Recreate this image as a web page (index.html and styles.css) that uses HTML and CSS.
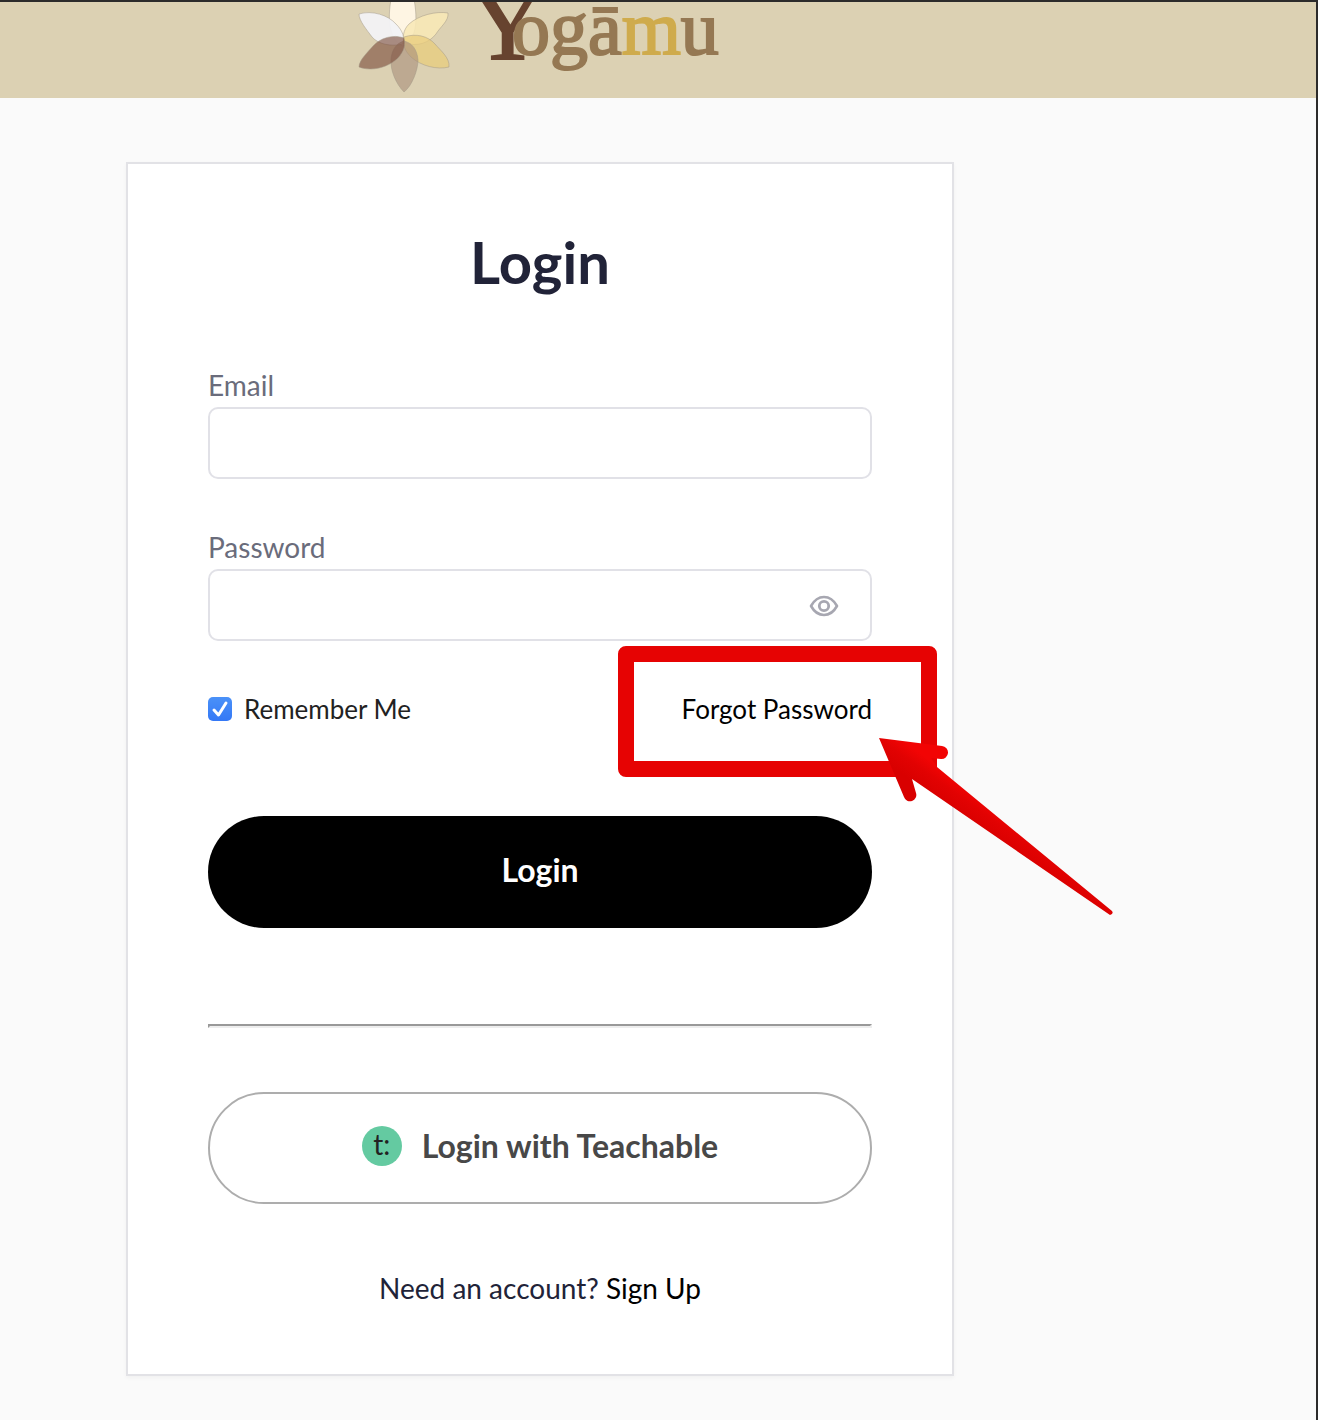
FILE: index.html
```html
<!DOCTYPE html>
<html lang="en">
<head>
<meta charset="utf-8">
<meta name="viewport" content="width=device-width, initial-scale=1">
<title>Yogāmu – Login</title>
<link rel="stylesheet" href="styles.css">
</head>
<body>
<header class="site-header">
  <a class="logo" href="#" aria-label="Yogāmu">
    <svg width="380" height="96" viewBox="350 2 380 96">
      <g stroke="#a39a88" stroke-opacity=".5" stroke-width="1">
        <path d="M403 46C389 40 386 18 393 -10H412C419 18 417 40 403 46Z" fill="#fff7e6" fill-opacity=".95"/>
        <path d="M359 14C372 10 388 15 396 24C403 31 405 38 403 44C391 47 378 44 372 37C367 30 359 21 359 14Z" fill="#f2f2f6" fill-opacity=".95"/>
        <path d="M448 13C436 11 419 15 409 24C403 30 402 38 405 43C417 47 429 43 436 34C440 27 449 21 448 13Z" fill="#f8e8b6" fill-opacity=".88"/>
        <path d="M449 67C437 70 421 66 411 57C404 50 402 43 404 37C416 33 428 36 435 44C441 51 450 58 449 67Z" fill="#e8cc7c" fill-opacity=".75"/>
        <path d="M404 92C396 84 390 70 391 59C392 49 397 43 404 41C412 43 417 49 418 60C418 70 412 86 404 92Z" fill="#a98f7d" fill-opacity=".62"/>
        <path d="M359 67C372 72 389 67 398 58C404 51 406 45 404 38C393 34 380 38 373 46C368 52 359 60 359 67Z" fill="#7b4c3b" fill-opacity=".62"/>
      </g>
      <text class="wordmark" y="54"><tspan class="wordmark-initial" x="470" y="59">Y</tspan><tspan x="512" y="54">ogā</tspan><tspan class="wordmark-gold">m</tspan><tspan>u</tspan></text>
    </svg>
  </a>
</header>
<main class="page">
  <section class="card">
    <h1 class="title">Login</h1>
    <form class="form">
      <div class="field">
        <label for="email">Email</label>
        <input class="text-input" id="email" type="email">
      </div>
      <div class="field">
        <label for="password">Password</label>
        <div class="password-box">
          <input class="text-input" id="password" type="password">
          <button class="reveal" type="button" aria-label="Show password">
            <svg width="32" height="24" viewBox="0 0 32 24" fill="none" stroke="#a7a7b1">
              <path d="M3 12Q8 3 16 3T29 12Q24 21 16 21T3 12Z" stroke-width="2.6" stroke-linejoin="round"/>
              <circle cx="16" cy="12" r="4.7" stroke-width="2.8"/>
            </svg>
          </button>
        </div>
      </div>
      <div class="options">
        <label class="remember"><input class="checkbox" type="checkbox" checked>Remember Me</label>
        <div class="forgot">
          <a href="#">Forgot Password</a>
          <div class="highlight"></div>
          <svg class="arrow" width="240" height="184" viewBox="876 734 240 184">
            <defs>
              <linearGradient id="arrow-red" gradientUnits="userSpaceOnUse" x1="916" y1="784" x2="936" y2="756">
                <stop offset="0" stop-color="#d90000"/>
                <stop offset=".45" stop-color="#e20202"/>
                <stop offset=".8" stop-color="#f20404"/>
              </linearGradient>
            </defs>
            <path d="M879 738L942 746A6.500 6.500 0 0 1 941 759L931 758L937 767L1112 911Q1114 914 1110 915L912 779L916 793A6 6 0 0 1 904 797Z" fill="url(#arrow-red)"/>
          </svg>
        </div>
      </div>
      <button class="button button-primary" type="submit">Login</button>
      <hr class="divider">
      <button class="button button-outline" type="button"><span class="badge">t:</span>Login with Teachable</button>
    </form>
    <p class="signup">Need an account? <a href="#">Sign Up</a></p>
  </section>
</main>
</body>
</html>
```
FILE: styles.css
```css
* {
  box-sizing: border-box;
}

body {
  margin: 0;
  min-height: 100vh;
  border-top: 2px solid #2c2b2b;
  border-right: 2px solid #2c2b2b;
  background: #fafafa;
  color: #212338;
  font: 26px/32px Lato, "Open Sans", sans-serif;
}

a {
  color: #000;
  text-decoration: none;
}

button,
input {
  font: inherit;
}

.site-header {
  height: 96px;
  padding-left: 350px;
  background: #dcd1b3;
}

.logo,
.logo svg {
  display: block;
}

.logo {
  width: 380px;
}

.wordmark {
  fill: #957853;
  stroke: #957853;
  stroke-width: 2px;
  font: 76px "Liberation Serif", serif;
}

.wordmark-initial {
  fill: #67432f;
  stroke: #67432f;
  font-size: 104px;
}

.wordmark-gold {
  fill: #cfab4c;
  stroke: #cfab4c;
}

.page {
  padding: 64px 24px 44px 126px;
}

.card {
  max-width: 828px;
  padding: 62px 80px 70px;
  border: 2px solid #e2e2e6;
  background: #fff;
  box-shadow: 0 2px 4px rgba(0, 0, 0, 0.04);
}

.title {
  margin: 0 0 71px;
  font-size: 58px;
  font-weight: 700;
  line-height: 72px;
  text-align: center;
}

.form,
.field {
  display: flex;
  flex-direction: column;
}

.field {
  gap: 6px;
  margin-bottom: 52px;
  color: #6a6c7b;
  font-size: 28px;
}

.text-input {
  width: 100%;
  height: 72px;
  padding: 0 24px;
  border: 2px solid #e1e1e7;
  border-radius: 10px;
  background: #fff;
}

.password-box {
  position: relative;
}

.reveal {
  position: absolute;
  top: 21px;
  right: 24px;
  width: 48px;
  height: 32px;
  padding: 0;
  border: 0;
  background: none;
}

.reveal svg {
  display: block;
  margin: 4px 8px;
}

.options {
  display: flex;
  justify-content: space-between;
  margin-bottom: 91px;
}

.remember {
  display: flex;
  align-items: center;
  gap: 12px;
  color: #222;
}

.checkbox {
  width: 24px;
  height: 24px;
  margin: 0;
  border-radius: 5px;
  appearance: none;
  background: linear-gradient(#4a91f8, #3478f6);
}

.checkbox:checked {
  background:
    url("data:image/svg+xml,%3Csvg xmlns='http://www.w3.org/2000/svg' viewBox='0 0 24 24'%3E%3Cpath d='M6 13L10.500 18L18 6' fill='none' stroke='white' stroke-width='3' stroke-linecap='round' stroke-linejoin='round'/%3E%3C/svg%3E"),
    linear-gradient(#4a91f8, #3478f6);
}

.forgot {
  position: relative;
}

.highlight {
  position: absolute;
  top: -47px;
  right: -65px;
  width: 319px;
  height: 131px;
  border: 16px solid #e60303;
  border-radius: 8px;
  pointer-events: none;
}

.arrow {
  position: absolute;
  top: 41px;
  right: -244px;
  pointer-events: none;
}

.button {
  display: flex;
  align-items: center;
  justify-content: center;
  gap: 20px;
  height: 112px;
  padding: 0 24px 4px;
  border: 0;
  border-radius: 56px;
  font-size: 32px;
  font-weight: 700;
}

.button-primary {
  background: #000;
  color: #fff;
}

.button-outline {
  border: 2px solid #adadad;
  background: #fff;
  color: #484848;
}

.badge {
  width: 40px;
  height: 40px;
  border-radius: 50%;
  background: #64caa1;
  color: #222;
  font-size: 28px;
  font-weight: 400;
  line-height: 36px;
}

.divider {
  width: 100%;
  height: 4px;
  margin: 96px 0 64px;
  border: 2px solid;
  border-color: #999 #eee #eee #999;
}

.signup {
  margin: 68px 0 0;
  font-size: 28px;
  text-align: center;
}
```
